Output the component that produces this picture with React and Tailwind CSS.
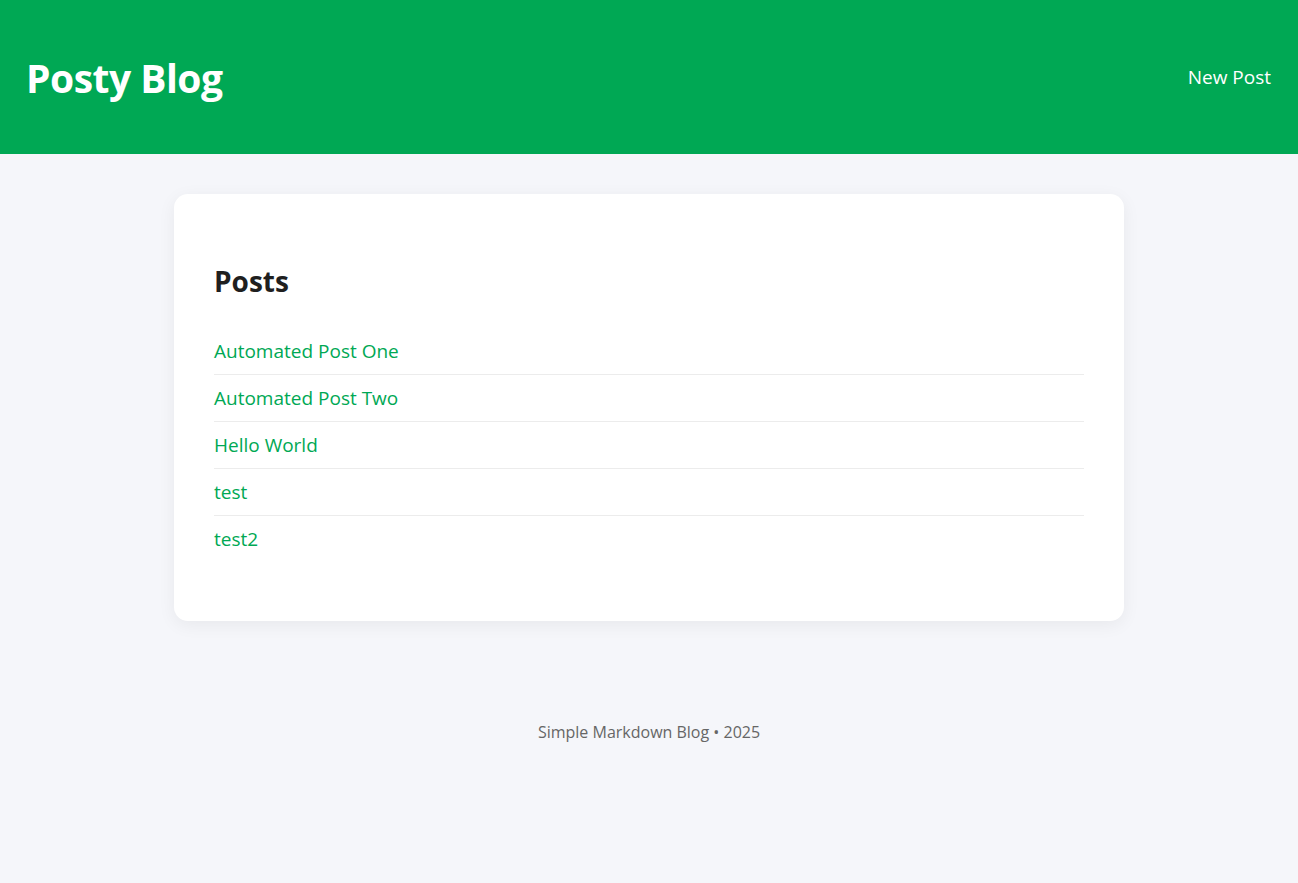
import React from 'react';

const POSTS = ['Automated Post One', 'Automated Post Two', 'Hello World', 'test', 'test2'];

export default function App() {
    return (
        <div className="min-h-screen bg-[#f5f6fa] font-['Open_Sans','Noto_Sans',sans-serif]">
            <header className="h-[154px] bg-[#00a854] px-[26px] flex items-center justify-between text-white">
                <h1 className="text-[39px] font-bold tracking-[-0.5px] leading-none">Posty Blog</h1>
                <a href="#" className="text-[19px] pr-[1px]">New Post</a>
            </header>

            <main className="w-[950px] mx-auto mt-[40px] bg-white rounded-[14px] shadow-[0_4px_18px_rgba(0,0,0,0.06)] px-[40px] pt-[73px] pb-[58px]">
                <h2 className="text-[28px] font-bold text-[#1f1f1f] leading-none mb-[33px]">Posts</h2>
                <ul>
                    {POSTS.map((title, i) => (
                        <li key={title} className={`h-[47px] flex items-center ${i < POSTS.length - 1 ? 'border-b border-[#ececec]' : ''}`}>
                            <a href="#" className="text-[19px] text-[#00a854]">{title}</a>
                        </li>
                    ))}
                </ul>
            </main>

            <footer className="text-center text-[16px] text-[#666] mt-[99px]">Simple Markdown Blog • 2025</footer>
        </div>
    );
}
